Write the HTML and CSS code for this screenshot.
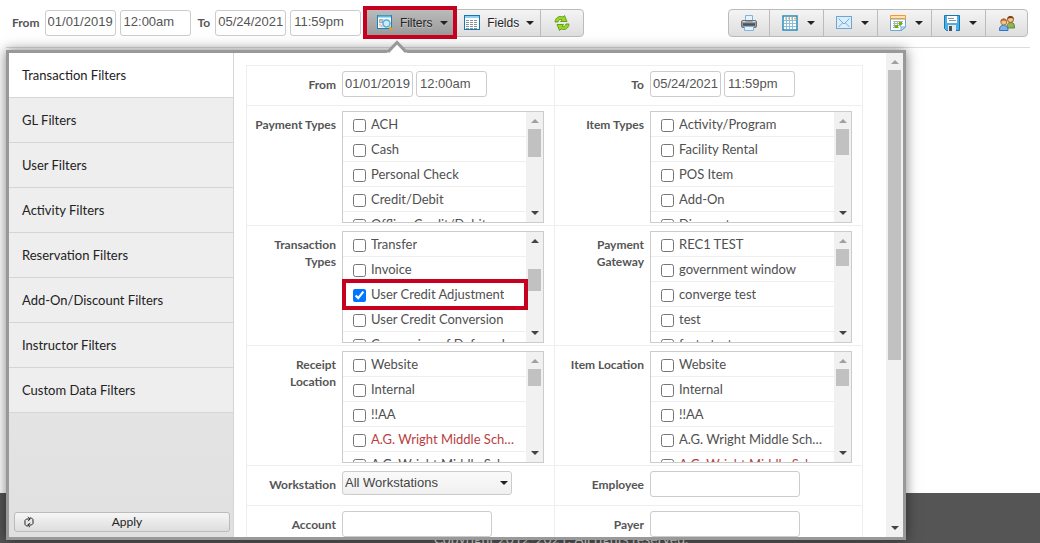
FILE: index.html
```html
<!DOCTYPE html>
<html lang="en">
<head>
  <meta charset="UTF-8" />
  <meta name="viewport" content="width=device-width, initial-scale=1.0" />
  <title>Transactions</title>
  <link rel="stylesheet" href="styles.css">
</head>
<body>

<main class="page">
  <!-- Toolbar -->
  <div class="toolbar">
    <label class="bar-label" for="barFromDate">From</label>
    <input class="text-box short" type="text" id="barFromDate" value="01/01/2019" />
    <input class="text-box short" type="text" aria-label="From time" value="12:00am" />
    <label class="bar-label" for="barToDate">To</label>
    <input class="text-box short" type="text" id="barToDate" value="05/24/2021" />
    <input class="text-box short" type="text" aria-label="To time" value="11:59pm" />

    <div class="btn-group">
      <button class="btn btn-wide active">
        <svg class="icon" viewBox="0 0 16 16"><rect x=".5" y=".5" width="14" height="13" fill="#fff" stroke="#1d82b8"/><path d="M1 1.500h13" stroke="#5db8e2" stroke-width="2"/><path d="M2 4h11v8.500H2z" fill="#e6e8ea"/><path d="M2.500 4.500h3v3h-3zM2.500 9.500l3 2.500" fill="#c5cacd" stroke="#a4abb0"/><circle cx="9.500" cy="8.500" r="3.500" fill="#c9ecff" stroke="#5cabd5" stroke-width="1.500"/><path d="M12.500 12l2.500 3" stroke="#eb9a25" stroke-width="2.500"/></svg>
        Filters <span class="caret"></span>
      </button>
      <button class="btn btn-wide">
        <svg class="icon" viewBox="0 0 16 16"><rect x=".5" y=".5" width="15" height="14" fill="#fff" stroke="#1679ad"/><path d="M1 2h14" stroke="#8fd0ee" stroke-width="2"/><path d="M2 5.500h12M2 7.500h12M2 9.500h12M2 11.500h12M2 13.500h12" stroke="#8a939b" stroke-dasharray="3 1"/></svg>
        Fields <span class="caret"></span>
      </button>
      <button class="btn btn-icon" aria-label="Refresh">
        <svg class="icon" viewBox="0 0 16 16"><path id="arrow" d="M1 7C1.500 2.500 5 .5 9 2L10.500.5 13 6.500 6.500 6.500 8 4.800C6 4 4.500 4.800 4 7z" fill="#9bd52b" stroke="#5a9b0d" stroke-width=".9"/><use href="#arrow" transform="rotate(180 8 8)"/></svg>
      </button>
    </div>

    <div class="btn-group right">
      <button class="btn btn-icon" aria-label="Print">
        <svg class="icon" viewBox="0 0 16 16"><path d="M4.500 5V.5h7V5" fill="#e4f2ff" stroke="#7fb3dd"/><rect x=".5" y="5.500" width="15" height="7" rx="1.500" fill="#9b9ea2" stroke="#6c6f73"/><path d="M2 9.500h12" stroke="#4d5054" stroke-width="2.500"/><path d="M1.500 6.500h3M11.500 6.500h3" stroke="#dadcde"/><path d="M3.500 11.500h9v4h-9z" fill="#e4f2ff" stroke="#7fb3dd"/></svg>
      </button>
      <button class="btn btn-menu" aria-label="Table">
        <svg class="icon" viewBox="0 0 16 16"><rect x="1" y="1" width="14" height="14" fill="#fff" stroke="#2a8bbd" stroke-width="1.500"/><path d="M3 3.500h11" stroke="#f3c173" stroke-width="2" stroke-dasharray="2 1"/><path d="M2 5.500h12M2 8.500h12M2 11.500h12M4.500 2v12M7.500 2v12M10.500 2v12" stroke="#8bbdd8"/></svg>
        <span class="caret"></span>
      </button>
      <button class="btn btn-menu" aria-label="Email">
        <svg class="icon" viewBox="0 0 16 16"><rect x=".5" y="1.500" width="15" height="12" fill="#d9efff" stroke="#6fa5cf"/><path d="M2.500 3.500l5.500 5.500 5.500-5.500M2.500 12l4-4M13.500 12l-4-4" fill="none" stroke="#78abd2"/></svg>
        <span class="caret"></span>
      </button>
      <button class="btn btn-menu" aria-label="Schedule">
        <svg class="icon" viewBox="0 0 16 16"><path d="M.5 4v11.500h11l4-3.500V4z" fill="#fff" stroke="#6cabd0"/><path d="M.5.5h15v3H.5z" fill="#ffe3b5" stroke="#f39a2d"/><path d="M3 6.500h10M3 8.500h10M3 10.500h8M3 12.500h6M4.500 6v7M7.500 6v7M10.500 6v6" stroke="#a9b4ba"/><path d="M9 7h3v3H9zM5 10h3v3H5z" fill="#65b800"/><path d="M11 15.500V12h4.500z" fill="#d7efff" stroke="#6cabd0"/></svg>
        <span class="caret"></span>
      </button>
      <button class="btn btn-menu" aria-label="Save">
        <svg class="icon" viewBox="0 0 16 16"><path d="M.5.5h15v15h-13l-2-2z" fill="#4cb0e6" stroke="#1878ad"/><path d="M3 1h10v7H3z" fill="#fff"/><path d="M4 3.500h6M5 5.500h7" stroke="#8a9298"/><path d="M4 10h8v6H4z" fill="#e6e9eb"/><path d="M5 11h3v5H5z" fill="#475058"/></svg>
        <span class="caret"></span>
      </button>
      <button class="btn btn-icon" aria-label="Users">
        <svg class="icon" viewBox="0 0 16 16"><path d="M8 13c0-4 1-5.500 4-5.500s3.500 2 3.500 5.500z" fill="#8fb457" stroke="#5f8530"/><circle cx="11.500" cy="4.500" r="3" fill="#f2c391" stroke="#9a5a25"/><path d="M8.300 4c0-4 6.500-4 6.500 0-2-1.500-4-1-6.500 0z" fill="#7e3f14"/><path d="M.5 15.500c0-4 1-5 4-5s4.500 1 4.500 5z" fill="#7cb4ee" stroke="#3473bb"/><circle cx="4.800" cy="7" r="3" fill="#f2c391" stroke="#b9732f"/><path d="M1.500 6.500c0-4 6.500-4 6.500 0-2-1.500-4-1-6.500 0z" fill="#b5651d"/></svg>
      </button>
    </div>
  </div>
</main>

<footer class="footer">Copyright 2012-2021. All rights reserved.</footer>

<!-- Filters popup -->
<section class="popup">
  <svg class="pointer" viewBox="0 0 20 13"><path d="M0 13L10 2l10 11z" fill="#fff"/><path d="M1 12l9-9.500 9 9.500" fill="none" stroke="#999" stroke-width="3"/></svg>

  <nav class="side">
    <a class="side-item selected" href="#">Transaction Filters</a>
    <a class="side-item" href="#">GL Filters</a>
    <a class="side-item" href="#">User Filters</a>
    <a class="side-item" href="#">Activity Filters</a>
    <a class="side-item" href="#">Reservation Filters</a>
    <a class="side-item" href="#">Add-On/Discount Filters</a>
    <a class="side-item" href="#">Instructor Filters</a>
    <a class="side-item" href="#">Custom Data Filters</a>
    <button class="apply">
      <svg class="apply-icon" viewBox="0 0 10 12"><path d="M4 10H2.500L1 8.500V4.500L2.500 3H6M4 .8L6.200 3 4 5.200M6 2h1.500L9 3.500v4L7.500 9H4M6 6.800L3.800 9 6 11.200" fill="none" stroke="#222"/></svg>
      <span class="apply-text">Apply</span>
    </button>
  </nav>

  <div class="content">
    <div class="grid">
      <div class="cell">
        <label class="name" for="fromDate">From</label>
        <div class="pair">
          <input class="text-box short" type="text" id="fromDate" value="01/01/2019" />
          <input class="text-box short" type="text" aria-label="From time" value="12:00am" />
        </div>
      </div>
      <div class="cell">
        <label class="name" for="toDate">To</label>
        <div class="pair">
          <input class="text-box short" type="text" id="toDate" value="05/24/2021" />
          <input class="text-box short" type="text" aria-label="To time" value="11:59pm" />
        </div>
      </div>

      <div class="cell">
        <span class="name">Payment Types</span>
        <div class="list">
          <div class="items">
            <label class="item"><input type="checkbox" /><span>ACH</span></label>
            <label class="item"><input type="checkbox" /><span>Cash</span></label>
            <label class="item"><input type="checkbox" /><span>Personal Check</span></label>
            <label class="item"><input type="checkbox" /><span>Credit/Debit</span></label>
            <label class="item"><input type="checkbox" /><span>Offline Credit/Debit</span></label>
          </div>
          <div class="scroll at-top"><div class="thumb tall"></div></div>
        </div>
      </div>
      <div class="cell">
        <span class="name">Item Types</span>
        <div class="list">
          <div class="items">
            <label class="item"><input type="checkbox" /><span>Activity/Program</span></label>
            <label class="item"><input type="checkbox" /><span>Facility Rental</span></label>
            <label class="item"><input type="checkbox" /><span>POS Item</span></label>
            <label class="item"><input type="checkbox" /><span>Add-On</span></label>
            <label class="item"><input type="checkbox" /><span>Discount</span></label>
          </div>
          <div class="scroll at-top"><div class="thumb medium"></div></div>
        </div>
      </div>

      <div class="cell">
        <span class="name">Transaction Types</span>
        <div class="list">
          <div class="items">
            <label class="item"><input type="checkbox" /><span>Transfer</span></label>
            <label class="item"><input type="checkbox" /><span>Invoice</span></label>
            <label class="item"><input type="checkbox" checked /><span>User Credit Adjustment</span></label>
            <label class="item"><input type="checkbox" /><span>User Credit Conversion</span></label>
            <label class="item"><input type="checkbox" /><span>Conversion of Deferred</span></label>
          </div>
          <div class="scroll"><div class="thumb scrolled"></div></div>
          <div class="marker"></div>
        </div>
      </div>
      <div class="cell">
        <span class="name">Payment Gateway</span>
        <div class="list">
          <div class="items">
            <label class="item"><input type="checkbox" /><span>REC1 TEST</span></label>
            <label class="item"><input type="checkbox" /><span>government window</span></label>
            <label class="item"><input type="checkbox" /><span>converge test</span></label>
            <label class="item"><input type="checkbox" /><span>test</span></label>
            <label class="item"><input type="checkbox" /><span>forte test</span></label>
          </div>
          <div class="scroll at-top"><div class="thumb"></div></div>
        </div>
      </div>

      <div class="cell">
        <span class="name">Receipt Location</span>
        <div class="list">
          <div class="items">
            <label class="item"><input type="checkbox" /><span>Website</span></label>
            <label class="item"><input type="checkbox" /><span>Internal</span></label>
            <label class="item"><input type="checkbox" /><span>!!AA</span></label>
            <label class="item red"><input type="checkbox" /><span>A.G. Wright Middle School</span></label>
            <label class="item"><input type="checkbox" /><span>A.G. Wright Middle School</span></label>
          </div>
          <div class="scroll at-top"><div class="thumb"></div></div>
        </div>
      </div>
      <div class="cell">
        <span class="name">Item Location</span>
        <div class="list">
          <div class="items">
            <label class="item"><input type="checkbox" /><span>Website</span></label>
            <label class="item"><input type="checkbox" /><span>Internal</span></label>
            <label class="item"><input type="checkbox" /><span>!!AA</span></label>
            <label class="item"><input type="checkbox" /><span>A.G. Wright Middle School</span></label>
            <label class="item red"><input type="checkbox" /><span>A.G. Wright Middle School</span></label>
          </div>
          <div class="scroll at-top"><div class="thumb"></div></div>
        </div>
      </div>

      <div class="cell">
        <label class="name" for="workstation">Workstation</label>
        <div class="select-wrap">
          <select class="select" id="workstation"><option>All Workstations</option></select>
          <span class="caret"></span>
        </div>
      </div>
      <div class="cell">
        <label class="name" for="employee">Employee</label>
        <input class="text-box long" type="text" id="employee" />
      </div>

      <div class="cell">
        <label class="name" for="account">Account</label>
        <input class="text-box long" type="text" id="account" />
      </div>
      <div class="cell">
        <label class="name" for="payer">Payer</label>
        <input class="text-box long" type="text" id="payer" />
      </div>
    </div>
  </div>

  <div class="scroll at-top"><div class="thumb main-thumb"></div></div>
</section>

</body>
</html>
```
FILE: styles.css
```css
* { margin: 0; padding: 0; box-sizing: border-box; }

html, body {
  height: 100%;
  overflow: hidden;
}

body {
  position: relative;
  font-family: Lato, sans-serif;
  font-size: 13px;
  color: #505050;
  background: #fff;
}

.page {
  height: calc(100% - 50px);
  padding: 0 10px 0 6px;
}

/* toolbar */
.toolbar {
  display: flex;
  align-items: center;
  gap: 4px;
  height: 48px;
  padding: 0 2px 2px 6px;
  border-bottom: 1px solid #ddd;
}

.bar-label, .name {
  font-size: 12px;
  font-weight: bold;
  line-height: 17px;
  color: #555;
}

.bar-label { margin-right: 1px; }
.text-box + .bar-label { margin-left: 3px; }

.text-box {
  height: 26px;
  padding: 0 2px 2px;
  font: 13px "Liberation Sans", sans-serif;
  color: #555;
  background: #fff;
  border: 1px solid #ccc;
  border-radius: 3px;
}

.short { width: 71px; }
.short + .short { padding-left: 3px; }
.long { width: 150px; }

.btn-group {
  display: flex;
  height: 28px;
  margin-left: 1px;
  border: 1px solid #bbb;
  border-radius: 4px;
  background: linear-gradient(#f4f4f4, #dedede);
}

.right { margin-left: auto; }

.btn {
  display: flex;
  align-items: center;
  justify-content: center;
  gap: 7px;
  font: 12px "Liberation Sans", sans-serif;
  color: #222;
  text-shadow: 0 1px 1px #fff;
  background: none;
  border: none;
  border-right: 1px solid #bbb;
}

.btn:last-child { border-right: none; }
.btn-wide { width: 87px; padding-left: 4px; }
.btn-icon { width: 42px; }
.btn-menu { width: 54px; gap: 9px; padding-left: 4px; }
.right .btn-icon { width: 41px; }

.active {
  position: relative;
  background: linear-gradient(#bbb, #999);
  text-shadow: 0 1px 1px #ccc;
}

.active::after {
  content: "";
  position: absolute;
  inset: -4px -4px -3px -4px;
  border: 4px solid #c8001f;
}

.icon { width: 16px; height: 16px; }

.caret {
  border: 4px solid transparent;
  border-top-color: #222;
  border-bottom: none;
}

/* popup */
.popup {
  position: absolute;
  top: 50px;
  right: 134px;
  bottom: 3px;
  left: 6px;
  display: flex;
  background: #fff;
  border: 3px solid #999;
  box-shadow: 0 0 12px rgba(0, 0, 0, 0.5);
}

.pointer {
  position: absolute;
  top: -13px;
  left: 378px;
  width: 20px;
  height: 13px;
}

.side {
  display: flex;
  flex-direction: column;
  width: 225px;
  border-right: 1px solid #d5d5d5;
  background: linear-gradient(#eee, #e0e0e0);
}

.side-item {
  height: 45px;
  padding-left: 13px;
  line-height: 44px;
  color: #222;
  text-decoration: none;
  background: #eee;
  border-bottom: 1px solid #d5d5d5;
}

.selected { background: #fff; }

.apply {
  display: flex;
  align-items: center;
  height: 20px;
  margin: auto 3px 5px 5px;
  padding: 0 9px;
  font: 12px Lato, sans-serif;
  color: #222;
  background: linear-gradient(#f6f6f6, #ddd);
  border: 1px solid #bbb;
  border-radius: 3px;
}

.apply-icon { width: 10px; height: 12px; }
.apply-text { flex: 1; padding-bottom: 2px; }

.content {
  flex: 1;
  padding: 12px 23px 0 12px;
  overflow: hidden;
}

.grid {
  display: grid;
  grid-template-columns: 1fr 1fr;
  border-top: 1px solid #eee;
  border-left: 1px solid #eee;
}

.cell {
  display: flex;
  align-items: flex-start;
  gap: 6px;
  min-height: 40px;
  padding: 5px 10px 2px 4px;
  border-right: 1px solid #eee;
  border-bottom: 1px solid #eee;
}

.name {
  flex: 1;
  padding-top: 5px;
  text-align: right;
}

.cell > :last-child { flex: none; }

.pair {
  display: flex;
  gap: 3px;
  width: 202px;
}

.cell > .long { margin-right: 52px; }

/* check lists */
.list {
  position: relative;
  display: flex;
  width: 202px;
  height: 112px;
  border: 1px solid #ccc;
}

.items {
  flex: 1;
  min-width: 0;
  overflow: hidden;
}

.item {
  display: flex;
  align-items: center;
  gap: 5px;
  height: 25px;
  padding: 0 10px;
  border-bottom: 1px solid #eee;
}

.item input {
  flex: none;
  width: 13px;
  height: 13px;
  margin-top: 3px;
}

.item span {
  padding-bottom: 1px;
  overflow: hidden;
  white-space: nowrap;
  text-overflow: ellipsis;
}

.red { color: #b94040; }

.marker {
  position: absolute;
  top: 47px;
  right: 15px;
  left: -1px;
  height: 31px;
  border: 4px solid #c8001f;
}

.scroll {
  display: flex;
  flex-direction: column;
  align-items: center;
  width: 17px;
  background: #f1f1f1;
}

.scroll::before, .scroll::after {
  content: "";
  margin: 7px 0 6px;
  border: 4px solid transparent;
  border-top: none;
  border-bottom-color: #444;
}

.scroll::after {
  margin: auto 0 7px;
  border-top: 4px solid #444;
  border-bottom: none;
}

.at-top::before { border-bottom-color: #a0a0a0; }

.thumb {
  width: 13px;
  height: 17px;
  background: #c1c1c1;
}

.tall { height: 28px; }
.medium { height: 26px; }
.scrolled { height: 22px; margin-top: 20px; }
.main-thumb { height: 60%; }

.select-wrap {
  position: relative;
  width: 170px;
  margin-right: 32px;
}

.select {
  width: 100%;
  height: 24px;
  padding: 0 2px 2px;
  font: 13px "Liberation Sans", sans-serif;
  color: #444;
  appearance: none;
  background: linear-gradient(#fafafa, #f0f0f0);
  border: 1px solid #ccc;
  border-radius: 3px;
}

.select-wrap .caret {
  position: absolute;
  top: 10px;
  right: 4px;
}

.footer {
  height: 70px;
  padding: 37px 0 0 82px;
  text-align: center;
  font-size: 14px;
  line-height: 17px;
  color: #ddd;
  background: #555;
}
```
